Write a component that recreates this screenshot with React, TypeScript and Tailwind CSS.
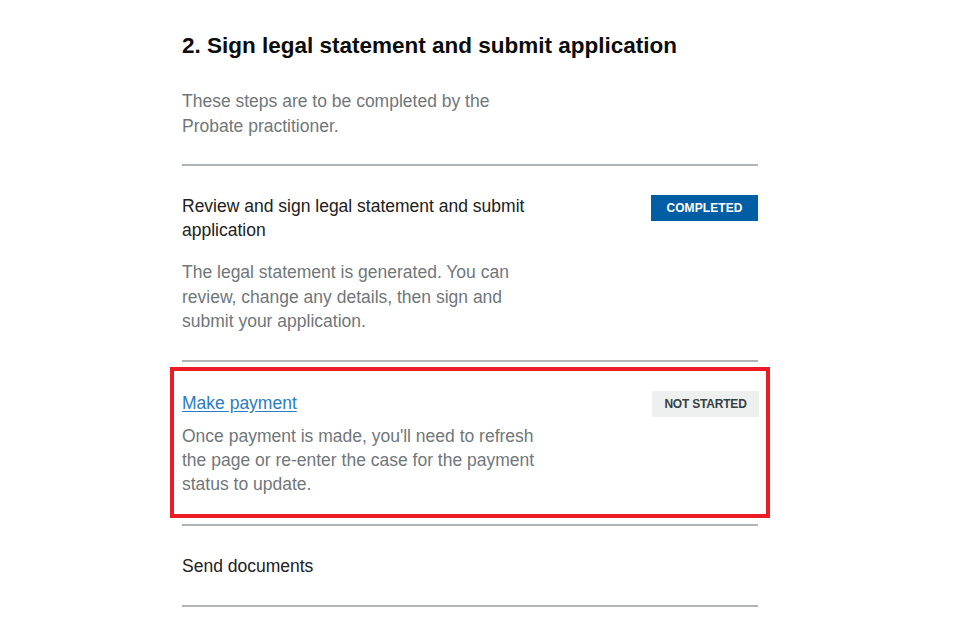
import React from "react";

type Status = "completed" | "not-started";

function Tag({ status }: { status: Status }) {
  const done = status === "completed";
  return (
    <span
      className={
        done
          ? "flex h-[26px] w-[107px] shrink-0 items-center justify-center bg-[#005ea5] text-[12px] font-bold tracking-[0.1px] text-white"
          : "flex h-[26px] w-[107px] shrink-0 items-center justify-center bg-[#eeefef] text-[12px] font-bold tracking-[-0.2px] text-[#383f43]"
      }
    >
      {done ? "COMPLETED" : "NOT STARTED"}
    </span>
  );
}

export default function App() {
  return (
    <div className="min-h-[640px] bg-white font-['Liberation_Sans',Arial,sans-serif]">
      <div className="ml-[182px] w-[576px] pt-[33px]">
        <h2 className="text-[22.5px] leading-[26px] font-bold text-[#0b0c0c]">
          2. Sign legal statement and submit application
        </h2>

        <p className="mt-[30px] mb-[26px] w-[364px] text-[17.5px] leading-[24.5px] text-[#6f777b]">
          These steps are to be completed by the Probate practitioner.
        </p>

        <div className="border-t-2 border-[#b1b4b6]" />

        {/* step: legal statement */}
        <div className="flex items-start justify-between border-b-2 border-[#b1b4b6] pt-[29px] pb-[26px]">
          <div className="w-[364px]">
            <div className="text-[17.5px] leading-[23.5px] text-[#212121]">
              Review and sign legal statement and submit application
            </div>
            <p className="mt-[18px] text-[17.5px] leading-[24.5px] text-[#6f777b]">
              The legal statement is generated. You can review, change any details, then sign and
              submit your application.
            </p>
          </div>
          <Tag status="completed" />
        </div>

        {/* step: payment, highlighted */}
        <div className="border-b-2 border-[#b1b4b6] pt-[5px] pb-[6px]">
          <div className="-mx-3 flex items-start justify-between border-4 border-[#ed1c24] pt-[20px] pr-[7px] pb-[18px] pl-[8px]">
            <div className="w-[370px]">
              <a
                href="#"
                className="text-[17.5px] leading-[24px] text-[#2b7cc5] underline underline-offset-[2px]"
              >
                Make payment
              </a>
              <p className="mt-[8px] text-[17.5px] leading-[24px] text-[#6f777b]">
                Once payment is made, you'll need to refresh the page or re-enter the case for the
                payment status to update.
              </p>
            </div>
            <Tag status="not-started" />
          </div>
        </div>

        {/* step: documents */}
        <div className="border-b-2 border-[#b1b4b6] pt-[28px] pb-[27px]">
          <div className="text-[17.5px] leading-[24px] text-[#212121]">Send documents</div>
        </div>
      </div>
    </div>
  );
}
